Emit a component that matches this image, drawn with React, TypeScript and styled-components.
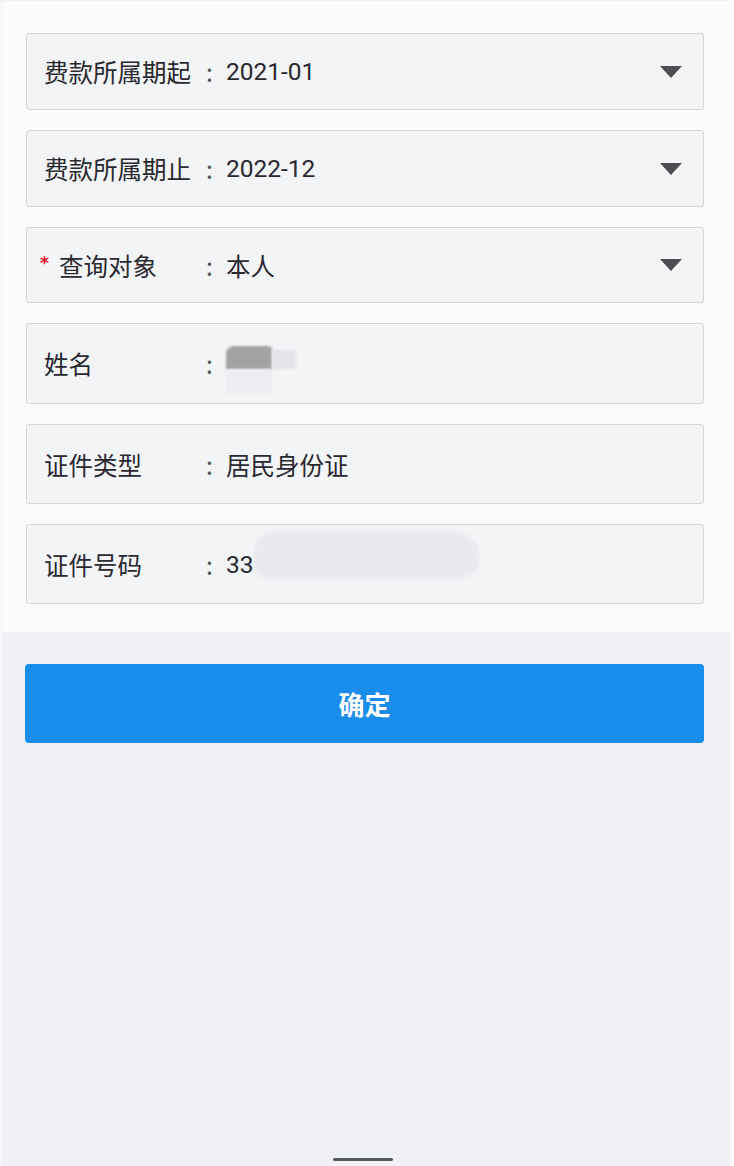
import React from "react";
import styled, { createGlobalStyle } from "styled-components";

const Global = createGlobalStyle`
  html, body { margin: 0; padding: 0; }
  body {
    background: #f0f1f4;
    font-family: "Noto Sans CJK SC", "Noto Sans", sans-serif;
    color: #2f2f33;
  }
`;

const Page = styled.div`
  width: 734px;
  height: 1166px;
  display: flex;
  flex-direction: column;
  background: #f0f1f4;
  border-left: 3px solid #f6f7f9;
  border-right: 4px solid #fafbfc;
  box-sizing: border-box;
  position: relative;
`;

const Panel = styled.div`
  background: #fafbfd;
  padding: 32px 26px 28px 23px;
  display: flex;
  flex-direction: column;
  gap: 20px;
  border-top: 1px solid #eef0f3;
`;

const Field = styled.div<{ $h: number }>`
  height: ${(p) => p.$h}px;
  box-sizing: border-box;
  background: #f3f4f6;
  border: 1px solid #d3d5d9;
  border-radius: 3px;
  display: flex;
  align-items: center;
  padding: 0 21px 0 17px;
  font-size: 24.5px;
`;

const Label = styled.div`
  width: 162px;
  display: flex;
  align-items: center;
  color: #2a2830;
  white-space: nowrap;
`;

const Star = styled.span`
  color: #e5102c;
  font-family: "DejaVu Sans", sans-serif;
  font-weight: 700;
  font-size: 17px;
  width: 19px;
  margin-left: -4px;
  margin-top: -5px;
`;

const Colon = styled.span`
  width: 20px;
  color: #555;
`;

const Value = styled.div<{ $digits?: boolean }>`
  flex: 1;
  display: flex;
  align-items: center;
  color: #2a2830;
  font-family: ${(p) =>
    p.$digits ? '"Roboto", "Noto Sans CJK SC", sans-serif' : '"Noto Sans CJK SC", sans-serif'};
  font-size: 24.5px;
  position: relative;
`;

const Caret = styled.svg`
  width: 22px;
  height: 12px;
`;

const NameBlur = styled.div`
  position: relative;
  width: 72px;
  height: 48px;
  margin-top: 12px;
`;

const BlurPiece = styled.div<{ $c: string }>`
  position: absolute;
  background: ${(p) => p.$c};
  filter: blur(1px);
`;

const Smudge = styled.div`
  position: absolute;
  left: 28px;
  top: -18px;
  width: 226px;
  height: 47px;
  background: #e9eaee;
  border-radius: 22px 30px 26px 18px;
  filter: blur(1.5px);
`;

const Footer = styled.div`
  padding: 32px 26px 0 22px;
`;

const Button = styled.button`
  width: 100%;
  height: 79px;
  border: none;
  border-radius: 4px;
  background: #1a8ceb;
  color: #fff;
  font-family: "Noto Sans CJK SC", sans-serif;
  font-weight: 700;
  font-size: 26px;
`;

const HomeBar = styled.div`
  position: absolute;
  left: 330px;
  bottom: 5px;
  width: 60px;
  height: 3px;
  border-radius: 2px;
  background: #555a60;
`;

const Arrow = () => (
  <Caret viewBox="0 0 22 12">
    <path d="M0 0 H22 L11 12 Z" fill="#4e4e52" />
  </Caret>
);

export default function App() {
  return (
    <>
      <Global />
      <Page>
        <Panel>
          <Field $h={77}>
            <Label>费款所属期起</Label>
            <Colon>:</Colon>
            <Value $digits>2021-01</Value>
            <Arrow />
          </Field>
          <Field $h={77}>
            <Label>费款所属期止</Label>
            <Colon>:</Colon>
            <Value $digits>2022-12</Value>
            <Arrow />
          </Field>
          <Field $h={76}>
            <Label>
              <Star>*</Star>查询对象
            </Label>
            <Colon>:</Colon>
            <Value>本人</Value>
            <Arrow />
          </Field>
          <Field $h={81}>
            <Label>姓名</Label>
            <Colon>:</Colon>
            <Value>
              <NameBlur>
                <BlurPiece $c="#a3a3a6" style={{ left: 0, top: 0, width: 46, height: 23, borderRadius: "8px 4px 0 0" }} />
                <BlurPiece $c="#e3e5ea" style={{ left: 46, top: 4, width: 24, height: 19 }} />
                <BlurPiece $c="#eceef1" style={{ left: 0, top: 24, width: 46, height: 24 }} />
              </NameBlur>
            </Value>
          </Field>
          <Field $h={80}>
            <Label>证件类型</Label>
            <Colon>:</Colon>
            <Value>居民身份证</Value>
          </Field>
          <Field $h={80}>
            <Label>证件号码</Label>
            <Colon>:</Colon>
            <Value $digits>
              33
              <Smudge />
            </Value>
          </Field>
        </Panel>
        <Footer>
          <Button>确定</Button>
        </Footer>
        <HomeBar />
      </Page>
    </>
  );
}
